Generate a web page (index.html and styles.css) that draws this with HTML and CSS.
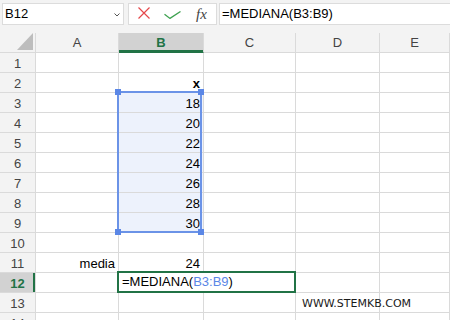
FILE: index.html
```html
<!DOCTYPE html>
<html lang="es">
<head>
    <meta charset="UTF-8">
    <meta name="viewport" content="width=device-width, initial-scale=1.0">
    <title>MEDIANA</title>
    <link rel="stylesheet" href="styles.css">
</head>
<body>
    <div class="toolbar">
        <div class="name-box">
            <span>B12</span>
            <svg class="chevron" width="6" height="4" viewBox="0 0 6 4"><polyline points="0.5,0.5 3,3 5.5,0.5" fill="none" stroke="#555" stroke-width="1"/></svg>
        </div>
        <div class="fx-box">
            <svg class="icon-cancel" width="12" height="12" viewBox="0 0 12 12"><path d="M0.5 0.5L11.5 11.5M11.5 0.5L0.5 11.5" stroke="#e5484b" stroke-width="1.2" fill="none"/></svg>
            <svg class="icon-enter" width="17" height="8" viewBox="0 0 17 8"><polyline points="0.5,3.3 6,7.4 16.5,0.5" fill="none" stroke="#3da14f" stroke-width="1.3"/></svg>
            <span class="fx">fx</span>
        </div>
        <div class="formula-box">=MEDIANA(B3:B9)</div>
    </div>

    <div class="sheet">
        <div class="grid">
            <div class="corner"><svg width="16" height="17" viewBox="0 0 16 17"><polygon points="16,0 16,17 0,17" fill="#bdbdbd"/></svg></div>
            <div class="ch">A</div>
            <div class="ch active">B</div>
            <div class="ch">C</div>
            <div class="ch">D</div>
            <div class="ch">E</div>

            <div class="rh">1</div><div class="cell"></div><div class="cell"></div><div class="cell"></div><div class="cell"></div><div class="cell"></div>
            <div class="rh">2</div><div class="cell"></div><div class="cell num bold">x</div><div class="cell"></div><div class="cell"></div><div class="cell"></div>
            <div class="rh">3</div><div class="cell"></div><div class="cell num sel">18</div><div class="cell"></div><div class="cell"></div><div class="cell"></div>
            <div class="rh">4</div><div class="cell"></div><div class="cell num sel">20</div><div class="cell"></div><div class="cell"></div><div class="cell"></div>
            <div class="rh">5</div><div class="cell"></div><div class="cell num sel">22</div><div class="cell"></div><div class="cell"></div><div class="cell"></div>
            <div class="rh">6</div><div class="cell"></div><div class="cell num sel">24</div><div class="cell"></div><div class="cell"></div><div class="cell"></div>
            <div class="rh">7</div><div class="cell"></div><div class="cell num sel">26</div><div class="cell"></div><div class="cell"></div><div class="cell"></div>
            <div class="rh">8</div><div class="cell"></div><div class="cell num sel">28</div><div class="cell"></div><div class="cell"></div><div class="cell"></div>
            <div class="rh">9</div><div class="cell"></div><div class="cell num sel">30</div><div class="cell"></div><div class="cell"></div><div class="cell"></div>
            <div class="rh">10</div><div class="cell"></div><div class="cell"></div><div class="cell"></div><div class="cell"></div><div class="cell"></div>
            <div class="rh">11</div><div class="cell num">media</div><div class="cell num">24</div><div class="cell"></div><div class="cell"></div><div class="cell"></div>
            <div class="rh active">12</div><div class="cell"></div><div class="cell"></div><div class="cell"></div><div class="cell"></div><div class="cell"></div>
            <div class="rh">13</div><div class="cell"></div><div class="cell"></div><div class="cell"></div><div class="cell site">WWW.STEMKB.COM</div><div class="cell"></div>
            <div class="rh">14</div><div class="cell"></div><div class="cell"></div><div class="cell"></div><div class="cell"></div><div class="cell"></div>
        </div>

        <!-- range B3:B9 -->
        <div class="range"></div>
        <span class="handle tl"></span>
        <span class="handle tr"></span>
        <span class="handle bl"></span>
        <span class="handle br"></span>

        <!-- cell being edited -->
        <div class="editor">=MEDIANA(<span class="ref">B3:B9</span>)</div>
    </div>
</body>
</html>
```

FILE: styles.css
```css
body {
    margin: 0;
    width: 450px;
    height: 320px;
    overflow: hidden;
    background-color: #fff;
    font-family: "Liberation Sans", Arial, sans-serif;
    font-size: 13px;
    color: #000;
}

/* formula bar */
.toolbar {
    display: flex;
    align-items: flex-start;
    height: 33px;
    box-sizing: border-box;
    padding: 3px 0 0 2px;
    background-color: #f3f3f3;
}
.name-box, .fx-box, .formula-box {
    height: 22px;
    box-sizing: border-box;
    border: 1px solid #dcdcdc;
    background-color: #fff;
    display: flex;
    align-items: center;
    line-height: 20px;
}
.name-box {
    width: 122px;
    padding: 0 3px 0 2px;
    justify-content: space-between;
}
.chevron {
    margin-top: 1px;
}
.fx-box {
    width: 89px;
    margin-left: 4px;
    padding-left: 9px;
}
.icon-cancel {
    margin-top: -3px;
}
.icon-enter {
    margin-left: 14px;
    margin-top: 2px;
}
.fx {
    margin-left: 15px;
    font-family: "Liberation Serif", serif;
    font-style: italic;
    font-size: 15px;
    color: #444;
}
.formula-box {
    flex: 1;
    margin-left: 2px;
    padding-left: 2px;
    border-right: none;
}

/* sheet */
.sheet {
    position: relative;
}
.grid {
    display: grid;
    grid-template-columns: 36px 83px 85px 92px 84px 1fr;
    grid-auto-rows: 20px;
}
.grid > div {
    box-sizing: border-box;
    border-right: 1px solid #dadada;
    border-bottom: 1px solid #dadada;
    white-space: nowrap;
}
.corner, .ch, .rh {
    background-color: #f3f3f3;
    color: #444;
}
.corner {
    display: flex;
    justify-content: flex-end;
    align-items: flex-end;
    padding: 0 2px 2px 0;
}
.ch {
    text-align: center;
    line-height: 19px;
}
.ch.active {
    background-color: #d2d2d2;
    color: #217346;
    font-weight: bold;
    border-bottom-color: #217346;
    box-shadow: inset 0 -2px 0 #217346;
}
.rh {
    text-align: center;
    line-height: 19px;
    padding-top: 1px;
}
.rh.active {
    background-color: #d2d2d2;
    color: #217346;
    font-weight: bold;
    box-shadow: inset -2px 0 0 #217346;
}
.cell {
    padding: 3px 3px 0;
    line-height: 16px;
}
.num {
    text-align: right;
}
.bold {
    font-weight: bold;
}
.sel {
    background-color: #edf2fc;
}
.site {
    padding-left: 6px;
    font-family: "DejaVu Sans", sans-serif;
    font-size: 11px;
    color: #1a1a1a;
}

/* overlays */
.range {
    position: absolute;
    left: 117px;
    top: 58px;
    width: 85px;
    height: 142px;
    box-sizing: border-box;
    border: 2px solid #6b93e7;
}
.handle {
    position: absolute;
    width: 6px;
    height: 6px;
    background-color: #5b87e6;
}
.handle.tl { left: 115px; top: 56px; }
.handle.tr { left: 198px; top: 56px; }
.handle.bl { left: 115px; top: 196px; }
.handle.br { left: 198px; top: 196px; }

.editor {
    position: absolute;
    left: 117px;
    top: 238px;
    width: 179px;
    height: 22px;
    box-sizing: border-box;
    border: 2px solid #217346;
    background-color: #fff;
    padding-left: 3px;
    line-height: 18px;
}
.ref {
    color: #5b87e6;
}
```
